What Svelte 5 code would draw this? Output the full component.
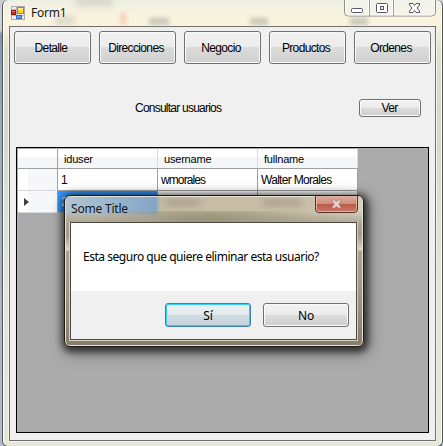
<script>
  const actions = ['Detalle', 'Direcciones', 'Negocio', 'Productos', 'Ordenes'];
  const columns = ['iduser', 'username', 'fullname'];
</script>

<div class="desktop">
  <main class="window">
    <header class="titlebar">
      <i class="smudge" style="left:66px;top:-3px;width:38px"></i>
      <i class="smudge" style="left:46px;top:16px;width:20px"></i>
      <i class="smudge warm" style="left:111px;top:13px;width:6px"></i>
      <i class="smudge dark" style="left:140px;top:18px;width:20px"></i>
      <i class="smudge dark" style="left:241px;top:18px;width:18px"></i>
      <i class="smudge dark" style="left:341px;top:18px;width:18px"></i>
      <svg class="appicon" width="14" height="14" viewBox="0 0 14 14">
        <rect x=".5" y=".5" width="13" height="13" fill="#e9ebee" stroke="#aaa" />
        <path d="M5.500 1v12M1 9.500h12M1 3.500h5" stroke="#b5bbc4" />
        <rect x="6.500" y="1.500" width="6" height="6" fill="#ffce35" stroke="#b98217" />
        <path d="M7 2h5v2H7z" fill="#ffe88b" />
        <rect x=".5" y="4.500" width="4" height="4" fill="#c8301d" stroke="#951b12" />
        <path d="M1 5h3v1H1z" fill="#e67560" />
        <rect x="5.500" y="9.500" width="5" height="3" fill="#6ba2ef" stroke="#356fc4" />
      </svg>
      <h1>Form1</h1>
      <div class="controls">
        <svg width="92" height="17" viewBox="0 0 92 17">
          <path d="M.5 0v12q0 4 4 4h83q4 0 4-4V0" fill="#f4f5ec" fill-opacity=".65" stroke="#8d8f8c" />
          <path d="M25.500 0v16M49.500 0v16" stroke="#9b9d98" />
          <path d="M1.500 0v12q0 3 3 3h20V0M26.500 0v15h22V0M50.500 0v15h37q3 0 3-3V0" fill="none" stroke="#fff" stroke-opacity=".8" />
          <rect x="7.500" y="8.500" width="11" height="4" rx="1" fill="#fff" stroke="#545667" />
          <rect x="32.500" y="3.500" width="11" height="9" rx="1" fill="#fff" stroke="#545667" />
          <rect x="36.500" y="6.500" width="3" height="3" fill="#f4f5ec" stroke="#545667" />
          <path d="M65.500 3.500h3.500l1.500 2 1.500-2h3.500v1.500L73 8l2.500 3v1.500H72l-1.500-2-1.500 2h-3.500V11L68 8l-2.500-3z" fill="#fff" stroke="#545667" />
        </svg>
      </div>
    </header>

    <section class="client">
      <nav>
        {#each actions as a}<button class="btn"><span>{a}</span></button>{/each}
      </nav>
      <div class="query">
        <span class="label">Consultar usuarios</span>
        <button class="btn small"><span>Ver</span></button>
      </div>
      <div class="grid">
        <div class="row head">
          <div class="corner"></div>
          {#each columns as c}<div class="cell"><span>{c}</span></div>{/each}
        </div>
        <div class="row">
          <div class="corner"></div>
          <div class="cell">1</div>
          <div class="cell w">wmorales</div>
          <div class="cell f">Walter Morales</div>
        </div>
        <div class="row">
          <div class="corner"><i class="arrow"></i></div>
          <div class="cell selected">2</div>
          <div class="cell"></div>
          <div class="cell"></div>
        </div>
      </div>
    </section>
  </main>

  <div class="dialog">
    <header>
      <div class="glass">
        <i class="blue"></i><i class="sand"></i><i class="ghost"></i><i class="ghost two"></i>
      </div>
      <h2>Some Title</h2>
      <svg class="close" width="43" height="17" viewBox="0 0 43 17">
        <defs>
          <linearGradient id="red" x2="0" y2="1">
            <stop offset="0" stop-color="#dcb0a2" /><stop offset=".47" stop-color="#cf8c7c" />
            <stop offset=".5" stop-color="#b95a48" /><stop offset="1" stop-color="#cb7a66" />
          </linearGradient>
        </defs>
        <path d="M.5 0v13q0 3.500 3.500 3.500h35q3.500 0 3.500-3.500V0" fill="url(#red)" stroke="#52302c" />
        <path d="M1.500 0v12.500q0 3 3 3h34q3 0 3-3V0" fill="none" stroke="#edc1b3" stroke-opacity=".8" />
        <path d="M17 4h3l1.500 2L23 4h3v1l-2.500 3L26 11v1h-3l-1.500-2-1.500 2h-3v-1l2.500-3L17 5z" fill="#e9d6d2" stroke="#a87870" stroke-width=".7" />
      </svg>
    </header>
    <div class="body">
      <p>Esta seguro que quiere eliminar esta usuario?</p>
      <footer>
        <button class="btn focus"><span>Sí</span></button>
        <button class="btn"><span>No</span></button>
      </footer>
    </div>
  </div>
</div>

<style>
  * { box-sizing: border-box; }
  :global(body) { margin: 0; overflow: hidden; }
  .desktop {
    position: relative; width: 443px; height: 446px; overflow: hidden;
    background: linear-gradient(#c9ced4 0, #cfd3dc 30px, #8797ad 34px, #9ba9bd 120px, #b3bccf 100%);
    font: 12px "Liberation Sans", Arial, sans-serif; color: #000; padding-left: 2px;
  }
  .window {
    width: 441px; height: 447px; overflow: hidden;
    border: 1px solid #55585a; border-top: 0; border-radius: 6px;
    box-shadow: inset 1px 0 #fff, inset -1px 0 #fbfbf2;
    background: linear-gradient(#eeefe3 0, #fbf4dd 20px, #f8f2dd 28px, #dddfcf 50px, #d6d8ca 130px, #e2e4d5 60%, #e5e7d9);
    padding: 0 6px;
  }
  .titlebar { position: relative; height: 26px; display: flex; padding: 6px 0 0 2px; }
  .smudge { position: absolute; height: 9px; background: #b9b9ae; opacity: .45; filter: blur(3px); }
  .smudge.dark { opacity: .8; height: 7px; filter: blur(2.500px); }
  .smudge.warm { background: #f5a58c; height: 12px; filter: blur(2px); }
  .appicon { position: relative; flex: none; }
  h1, h2 { position: relative; margin: 0; font: 12px/16px "Noto Sans", "Open Sans", sans-serif; white-space: nowrap; letter-spacing: -.2px; }
  h1 { margin: -1px 0 0 6px; color: #17171b; }
  .controls { position: absolute; left: 335px; top: 0; height: 17px; }
  .controls svg, .close { display: block; }
  .client {
    width: 427px; height: 415px; background: #f0f0f0;
    border: 1px solid #6f706b; padding: 4px 0 0 4px;
    box-shadow: 0 0 0 1px #f4f4e9;
  }
  nav { display: flex; gap: 8px; }
  .btn {
    width: 77px; height: 33px; padding: 0; border: 1px solid #707070; border-radius: 3px;
    box-shadow: inset 0 0 0 1px #fafafa; font: inherit; color: #000;
    background: linear-gradient(#f2f2f2 0, #ebebeb 49%, #dcdcdc 50%, #cfcfcf 100%);
    display: flex; align-items: center; justify-content: center; white-space: nowrap;
  }
  .btn span { letter-spacing: -.65px; margin-right: 3px; }
  .query { display: flex; height: 83px; align-items: center; padding: 4px 0 0 121px; }
  .label { width: 224px; letter-spacing: -.77px; }
  .btn.small { width: 62px; height: 18px; }
  .btn.small span { margin-right: 1px; }
  .grid { width: 413px; height: 286px; margin-left: 2px; border: 1px solid #000; background: #ababab; padding: 1px 0 0 1px; }
  .row { display: flex; width: 340px; height: 22px; background: #fff; }
  .row.head { height: 20px; border-bottom: 1px solid #a0a0a0; background: linear-gradient(#fff 40%, #f5f6f8 44%, #f5f6f8); }
  .corner { width: 40px; border-right: 1px solid #a0a0a0; display: flex; align-items: center; padding-left: 6px; }
  .row:not(.head) .corner { background: linear-gradient(90deg, #fff 25%, #f6f7f9 27%); border-bottom: 1px solid #d6d8dd; }
  .cell { width: 100px; border-right: 1px solid #a0a0a0; border-bottom: 1px solid #a0a0a0; padding-left: 3px; line-height: 22px; letter-spacing: -.4px; white-space: nowrap; }
  .head .cell { border-bottom: 0; border-right-color: #d9dbe0; padding-left: 6px; line-height: 20px; font-size: 11px; letter-spacing: -.2px; }
  .cell.w { letter-spacing: -.9px; }
  .cell.f { letter-spacing: -.7px; }
  .selected { background: #3399ff; color: #fff; }
  .arrow { border: 4px solid transparent; border-left: 5px solid #404040; border-right: 0; }
  .dialog {
    position: absolute; left: 64px; top: 195px; width: 300px; height: 152px;
    border: 1px solid #1c1b19; border-radius: 6px; background: linear-gradient(#c7bda5, #aca48f 27px, #a49c88 40px, #dcd8cc 54px, #aaa38f 55px, #a39b86 60%, #877e69);
    box-shadow: inset 0 0 0 1px #e6e1d2, 1px 2px 7px 3px rgba(0,0,0,.62), 3px 4px 16px 2px rgba(0,0,0,.35);
    padding: 0 6px;
  }
  .dialog header { position: relative; height: 26px; display: flex; justify-content: space-between; margin-right: -1px; }
  .glass { position: absolute; inset: 1px -4px 0 -5px; overflow: hidden; border-radius: 4px 4px 0 0; background: linear-gradient(90deg, #c4bba2, #c8bea6 80%, #d6d1c1); }
  .glass::after { content: ''; position: absolute; inset: 14px 0 0; background: radial-gradient(ellipse 110px 16px at 47% 75%, #7e745d, transparent), linear-gradient(transparent, #9c937f); opacity: .6; }
  .glass i { position: absolute; }
  .blue { left: -3px; top: -3px; width: 95px; height: 21px; background: linear-gradient(90deg, #b3c6d3, #81a5c6); filter: blur(1.500px); }
  .sand { left: -5px; top: 18px; width: 105px; height: 12px; background: #c5c4b8; filter: blur(3px); }
  .ghost { left: 100px; top: 3px; width: 34px; height: 5px; background: #a3998a; filter: blur(3px); }
  .ghost.two { left: 197px; width: 38px; }
  h2 { padding-top: 5px; color: #151518; }
  .close { position: relative; }
  .body { width: 287px; height: 118px; margin-left: -1px; border: 1px solid #4f4a40; box-shadow: 0 0 0 1px #d5cfbd; background: #f0f0f0; }
  p { height: 68px; margin: 0; padding: 26px 0 0 12px; background: #fff; font: 12px/16px "Noto Sans", "Open Sans", sans-serif; white-space: nowrap; letter-spacing: -.47px; }
  footer { display: flex; gap: 12px; padding: 12px 0 0 94px; }
  footer .btn { width: 86px; height: 24px; font: 12px "Noto Sans", "Open Sans", sans-serif; }
  footer .btn span { letter-spacing: -.2px; margin: 0; }
  .focus { border-color: #3c7fb1; box-shadow: inset 0 0 0 1px #2fd0f8; background: linear-gradient(#eef2f4 0, #e2eaee 49%, #cfdce2 50%, #c3d1d8 100%); }
</style>
